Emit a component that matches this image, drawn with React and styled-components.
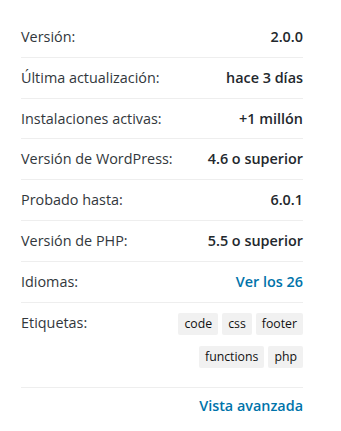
import React from "react"
import styled, { createGlobalStyle } from "styled-components"

const GlobalStyle = createGlobalStyle`
  body {
    margin: 0;
    background: #fff;
    font-family: "Open Sans", "Noto Sans", sans-serif;
  }
`

const meta = [
  { label: "Versión:", value: "2.0.0" },
  { label: "Última actualización:", value: "hace 3 días" },
  { label: "Instalaciones activas:", value: "+1 millón" },
  { label: "Versión de WordPress:", value: "4.6 o superior" },
  { label: "Probado hasta:", value: "6.0.1" },
  { label: "Versión de PHP:", value: "5.5 o superior" },
  { label: "Idiomas:", value: "Ver los 26", link: true },
]

const tags = ["code", "css", "footer", "functions", "php"]

const PluginMeta = () => {
  return (
    <Wrapper>
      <GlobalStyle />
      <MetaList>
        {meta.map((item) => (
          <MetaRow key={item.label}>
            <Label>{item.label}</Label>
            {item.link ? (
              <MetaLink href="#">{item.value}</MetaLink>
            ) : (
              <Value>{item.value}</Value>
            )}
          </MetaRow>
        ))}
        <MetaRow>
          <Label>Etiquetas:</Label>
          <Tags>
            {tags.map((tag) => (
              <Tag key={tag} href="#">
                {tag}
              </Tag>
            ))}
          </Tags>
        </MetaRow>
      </MetaList>
      <Footer>
        <MetaLink href="#">Vista avanzada</MetaLink>
      </Footer>
    </Wrapper>
  )
}

const Wrapper = styled.div`
  width: 282px;
  padding: 17px 38px 0 21px;
  font-size: 14.4px;
  line-height: 23.8px;
`

const MetaList = styled.ul`
  list-style: none;
  margin: 0;
  padding: 0;
`

const MetaRow = styled.li`
  display: flex;
  justify-content: space-between;
  align-items: flex-start;
  padding: 8px 0;
  border-top: 1px solid #eee;

  &:first-child {
    border-top: none;
  }
`

const Label = styled.span`
  color: #32373c;
  white-space: nowrap;
`

const Value = styled.strong`
  color: #23282d;
  font-weight: 600;
`

const MetaLink = styled.a`
  color: #0073aa;
  font-weight: 600;
  text-decoration: none;
`

const Tags = styled.div`
  display: flex;
  flex-wrap: wrap;
  justify-content: flex-end;
  gap: 11px 4px;
  width: 150px;
  margin-top: 2px;
  padding-bottom: 11px;
`

const Tag = styled.a`
  display: inline-flex;
  align-items: center;
  height: 22px;
  padding: 0 6px;
  background: #f1f1f1;
  color: #111;
  font-size: 12.3px;
  border-radius: 2px;
  text-decoration: none;
`

const Footer = styled.div`
  display: flex;
  justify-content: flex-end;
  padding: 6px 0;
  border-top: 1px solid #eee;
`

export default PluginMeta
